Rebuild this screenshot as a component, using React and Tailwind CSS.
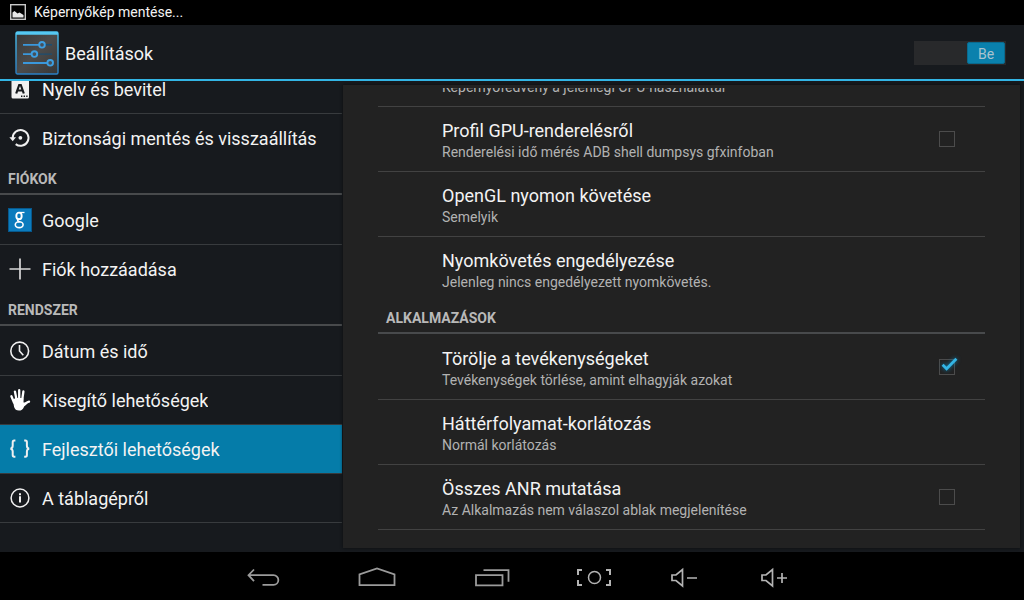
import { useState } from 'react'

const sections = [
  {
    items: [
      { label: 'Nyelv és bevitel', icon: LanguageIcon },
      { label: 'Biztonsági mentés és visszaállítás', icon: BackupIcon },
    ],
  },
  {
    title: 'FIÓKOK',
    items: [
      { label: 'Google', icon: GoogleIcon },
      { label: 'Fiók hozzáadása', icon: AddIcon },
    ],
  },
  {
    title: 'RENDSZER',
    items: [
      { label: 'Dátum és idő', icon: ClockIcon },
      { label: 'Kisegítő lehetőségek', icon: HandIcon },
      { label: 'Fejlesztői lehetőségek', icon: BracesIcon },
      { label: 'A táblagépről', icon: InfoIcon },
    ],
  },
]

const monitoring = [
  { summary: 'Képernyőfedvény a jelenlegi CPU-használattal' },
  { id: 'gpu', title: 'Profil GPU-renderelésről', summary: 'Renderelési idő mérés ADB shell dumpsys gfxinfoban' },
  { title: 'OpenGL nyomon követése', summary: 'Semelyik' },
  { title: 'Nyomkövetés engedélyezése', summary: 'Jelenleg nincs engedélyezett nyomkövetés.' },
]

const apps = [
  { id: 'destroy', title: 'Törölje a tevékenységeket', summary: 'Tevékenységek törlése, amint elhagyják azokat' },
  { title: 'Háttérfolyamat-korlátozás', summary: 'Normál korlátozás' },
  { id: 'anr', title: 'Összes ANR mutatása', summary: 'Az Alkalmazás nem válaszol ablak megjelenítése' },
]

function Icon({ children }) {
  return (
    <svg width="24" height="24" viewBox="0 0 24 24" fill="none" stroke="#f0f0f0" strokeWidth="1.6" className="shrink-0" aria-hidden="true">
      {children}
    </svg>
  )
}

function LanguageIcon() {
  return (
    <Icon>
      <rect x="3.5" y="3" width="17.5" height="18.5" rx="1.5" fill="#f0f0f0" stroke="none" />
      <path d="M8.2 16.5 11.200 8h1.600l3 8.500M9.500 13.500h5" stroke="#16191d" strokeWidth="2.2" />
      <path d="M13 19.200h1.400M15.600 19.200H17M18.200 19.200h1.400" stroke="#16191d" strokeWidth="1.4" />
    </Icon>
  )
}

function BackupIcon() {
  return (
    <Icon>
      <path d="M4.700 12a7.900 7.900 0 1 1 3 6.100" strokeWidth="2" />
      <path d="M1.400 11.300h6.600l-3.300 4z" fill="#f0f0f0" stroke="none" />
      <circle cx="12.400" cy="11.800" r="1.900" fill="#f0f0f0" stroke="none" />
    </Icon>
  )
}

function GoogleIcon() {
  return (
    <Icon>
      <rect x="0.5" y="0.5" width="23" height="23" fill="#0b7bbd" stroke="#07588c" strokeWidth="1" />
      <ellipse cx="11" cy="7.900" rx="2.700" ry="3.300" strokeWidth="1.900" stroke="#fff" />
      <path d="M11.500 4.500h5" strokeWidth="1.300" stroke="#fff" />
      <path d="M11 11.200c-2 .9-1.600 1.900.6 3" strokeWidth="1.700" stroke="#fff" />
      <ellipse cx="11.200" cy="16.700" rx="3.900" ry="2.900" strokeWidth="1.600" stroke="#fff" />
    </Icon>
  )
}

function AddIcon() {
  return (
    <Icon>
      <path d="M12 1.5v21M1.5 12h21" strokeWidth="1.7" stroke="#d8d8d8" />
    </Icon>
  )
}

function ClockIcon() {
  return (
    <Icon>
      <circle cx="11.7" cy="12" r="8.9" />
      <path d="M11.5 6v6l3.8 4.2" />
    </Icon>
  )
}

function HandIcon() {
  return (
    <Icon>
      <g stroke="#fff" strokeLinecap="round">
        <path d="M3.4 8.2 6 14.5M6.9 3.6 8.6 12M11.2 2.2V12M15.4 3.5 14.2 12" strokeWidth="2.3" />
        <path d="M21 13.6c-2 .2-3 1.8-5.2 3.4" strokeWidth="2.4" />
      </g>
      <path d="M4.8 11.8 7.6 10h7.7l.3 4.6 2.2.2-2 4.4c-1 2.3-2.4 3.4-4.9 3.4-2.6 0-4-1.3-4.8-3.6z" fill="#fff" stroke="none" />
    </Icon>
  )
}

function BracesIcon() {
  return (
    <Icon>
      <path d="M7.4 3.6H6.2C5 3.6 4.7 4.4 4.7 5.4v3.4c0 1.6-.6 2.6-2.2 2.9 1.6.3 2.2 1.3 2.2 2.9V18c0 1 .3 1.8 1.5 1.8h1.2" strokeWidth="2" />
      <path d="M16.2 3.6h1.2c1.2 0 1.5.8 1.5 1.8v3.4c0 1.6.6 2.6 2.2 2.9-1.6.3-2.2 1.3-2.2 2.9V18c0 1-.3 1.8-1.5 1.8h-1.2" strokeWidth="2" />
    </Icon>
  )
}

function InfoIcon() {
  return (
    <Icon>
      <circle cx="12" cy="12" r="8.9" strokeWidth="1.5" />
      <path d="M12 10.3v6.2M12 7.2v2" strokeWidth="2" />
    </Icon>
  )
}

function SettingsLogo() {
  return (
    <svg width="44" height="44" viewBox="0 0 44 44" fill="none" aria-hidden="true">
      <defs>
        <linearGradient id="face" x1="0" y1="0" x2="1" y2="1">
          <stop offset="0" stopColor="#383838" />
          <stop offset="0.5" stopColor="#4c4c4c" />
          <stop offset="1" stopColor="#363636" />
        </linearGradient>
        <linearGradient id="edge" x1="0" y1="0" x2="0" y2="1">
          <stop offset="0" stopColor="#4cc3f0" />
          <stop offset="1" stopColor="#2a7fc4" />
        </linearGradient>
      </defs>
      <rect x="1" y="1" width="42" height="42" rx="1.5" fill="url(#face)" stroke="url(#edge)" strokeWidth="1.4" />
      <path d="M1 2.3h42" stroke="#55c8f2" strokeWidth="2.8" />
      <path d="M28 13.8h9M21 23.1h16" stroke="#1d4d70" strokeWidth="1.4" />
      <path d="M8 13.8h16M8 23.1h8.5M8 32h24" stroke="#3a98dc" strokeWidth="1.8" />
      <g fill="#46505a" stroke="#3d9fe2" strokeWidth="1.9">
        <circle cx="27" cy="13.8" r="2.8" />
        <circle cx="19.4" cy="23.1" r="2.8" />
        <circle cx="35.2" cy="31.8" r="2.8" />
      </g>
    </svg>
  )
}

function SectionHeader({ children }) {
  return (
    <h2 className="mb-px flex h-[33px] items-center border-b-2 border-[#484a4c] px-2 pt-0.5 text-sm font-bold text-[#b9b9b9]">
      {children}
    </h2>
  )
}

function Sidebar({ selected, onSelect }) {
  return (
    <nav className="w-[33.4%] shrink-0 overflow-hidden">
      <div className="-mt-4">
        {sections.map((section, i) => (
          <section key={i}>
            {section.title && <SectionHeader>{section.title}</SectionHeader>}
            {section.items.map(({ label, icon: ItemIcon }, j) => {
              const divider = j < section.items.length - 1 || i === sections.length - 1
              return (
                <button
                  key={label}
                  type="button"
                  onClick={() => onSelect(label)}
                  className={`flex w-full items-center gap-[10px] px-2 text-left text-lg leading-6 ${
                    divider ? 'h-[49px] border-b border-[#383b3e]' : 'h-12'
                  } ${selected === label ? 'bg-[#057ca9]' : ''}`}
                >
                  <ItemIcon />
                  <span className="truncate pt-0.5">{label}</span>
                </button>
              )
            })}
          </section>
        ))}
      </div>
    </nav>
  )
}

function Preference({ item, checked, onToggle, divider }) {
  const Row = item.id ? 'label' : 'div'
  return (
    <Row className={`flex items-center pr-[30px] pl-16 ${divider ? 'h-[65px] border-b border-[#424242]' : 'h-16'}`}>
      <span className="flex-1 pt-0.5">
        <span className="block min-h-6 text-lg leading-6">{item.title}</span>
        <span className="block text-sm leading-[18px] text-[#b2b2b2]">{item.summary}</span>
      </span>
      {item.id && (
        <span className="relative flex">
          <input
            type="checkbox"
            checked={checked}
            onChange={() => onToggle(item.id)}
            className="size-4 appearance-none border border-[#4c4c4c]"
          />
          {checked && (
            <svg width="24" height="24" viewBox="0 0 24 24" fill="none" className="pointer-events-none absolute -top-1 -left-1 drop-shadow-[0_0_2px_#0c7fae]" aria-hidden="true">
              <path d="m7.6 9.800 4 4L21.400 3.800" stroke="#33b5e5" strokeWidth="2.800" />
            </svg>
          )}
        </span>
      )}
    </Row>
  )
}

function PreferenceList({ items, checks, onToggle, lastDivider }) {
  return items.map((item, i) => (
    <Preference
      key={item.summary}
      item={item}
      checked={!!checks[item.id]}
      onToggle={onToggle}
      divider={lastDivider || i < items.length - 1}
    />
  ))
}

function NavBar() {
  return (
    <footer className="flex h-12 shrink-0 justify-center bg-black pt-0.5">
      <button type="button" aria-label="Vissza" className="flex w-[115px] items-center justify-center">
        <svg width="36" height="24" viewBox="0 0 36 24" fill="none" stroke="#9b9b9b" strokeWidth="1.8">
          <path d="M10 4.500 4.500 10.200l5.500 6M4.500 10.200h25a4.800 4.800 0 0 1 0 9.700H18.500" />
        </svg>
      </button>
      <button type="button" aria-label="Kezdőképernyő" className="flex w-[115px] items-center justify-center">
        <svg width="40" height="24" viewBox="0 0 40 24" fill="none" stroke="#9b9b9b" strokeWidth="1.8">
          <path d="M2.500 20.200V9.500l17.500-6 17.500 6v10.700z" />
        </svg>
      </button>
      <button type="button" aria-label="Legutóbbiak" className="flex w-[115px] items-center justify-center">
        <svg width="38" height="24" viewBox="0 0 38 24" fill="none" stroke="#9b9b9b" strokeWidth="1.8">
          <path d="M3 10.200h26.500v10.200H3zM10.500 5.200h25v11.500" />
        </svg>
      </button>
      <button type="button" aria-label="Képernyőkép" className="flex w-[90px] items-center justify-center">
        <svg width="36" height="24" viewBox="0 0 36 24" fill="none" stroke="#b4b4b4" strokeWidth="2">
          <path d="M5 5H1v5M1 15v5h4M29 5h4v5M33 15v5h-4" />
          <circle cx="17.500" cy="12.500" r="6" strokeWidth="1.5" />
        </svg>
      </button>
      <button type="button" aria-label="Hangerő le" className="flex w-[90px] items-center justify-center">
        <svg width="28" height="24" viewBox="0 0 28 24" fill="none" stroke="#b4b4b4" strokeWidth="1.7">
          <path d="M1 10v5.500h4l6.500 5.500v-16.500L5 10zM16 13h10" />
        </svg>
      </button>
      <button type="button" aria-label="Hangerő fel" className="flex w-[90px] items-center justify-center">
        <svg width="28" height="24" viewBox="0 0 28 24" fill="none" stroke="#b4b4b4" strokeWidth="1.7">
          <path d="M1 10v5.500h4l6.500 5.500v-16.500L5 10zM16 13h10M21 8v10" />
        </svg>
      </button>
    </footer>
  )
}

export default function App() {
  const [selected, setSelected] = useState('Fejlesztői lehetőségek')
  const [enabled, setEnabled] = useState(true)
  const [checks, setChecks] = useState({ destroy: true })

  const toggle = (id) => setChecks((prev) => ({ ...prev, [id]: !prev[id] }))

  return (
    <div className="flex h-screen flex-col overflow-hidden bg-[#171a1e] font-[Roboto,sans-serif] text-[#f3f3f3]">
      <div className="flex h-[25px] shrink-0 items-center gap-2 bg-black px-[10px] pb-0.5 text-sm">
        <svg width="16" height="16" viewBox="0 0 16 16" fill="none" aria-hidden="true">
          <rect x="0.7" y="0.7" width="14.6" height="14.6" stroke="#c8c8c8" strokeWidth="1.4" />
          <path d="M2.5 13.5v-5l2-1.5 3 2.5 2-1 4 2.500v2.500z" fill="#e8e8e8" />
        </svg>
        <span>Képernyőkép mentése...</span>
      </div>

      <header className="flex h-14 shrink-0 items-center justify-between border-b-2 border-[#33b5e5] pt-0.5 pr-[18px] pl-[15px]">
        <div className="flex items-center gap-[6px]">
          <SettingsLogo />
          <h1 className="pt-0.5 text-lg">Beállítások</h1>
        </div>
        <button
          type="button"
          role="switch"
          aria-checked={enabled}
          onClick={() => setEnabled(!enabled)}
          className={`flex h-6 w-[92px] bg-[#28292b] p-px ${enabled ? 'justify-end' : 'justify-start'}`}
        >
          <span className="flex w-[38px] items-center justify-center rounded-xs border border-[#0a6a8e] bg-[#0a81ad] pt-0.5 text-sm text-[#a9c3cf]">
            {enabled ? 'Be' : 'Ki'}
          </span>
        </button>
      </header>

      <div className="flex min-h-0 flex-1">
        <Sidebar selected={selected} onSelect={setSelected} />
        <main className="mt-1 mr-1 mb-1 ml-px flex-1 overflow-hidden bg-[#222222] px-[35px] pt-[3px] shadow-[0_0_3px_#0b0d0f]">
          <div className="h-full overflow-hidden">
            <div className="-mt-[46px]">
              <PreferenceList items={monitoring} checks={checks} onToggle={toggle} />
              <SectionHeader>ALKALMAZÁSOK</SectionHeader>
              <PreferenceList items={apps} checks={checks} onToggle={toggle} lastDivider />
            </div>
          </div>
        </main>
      </div>

      <NavBar />
    </div>
  )
}
